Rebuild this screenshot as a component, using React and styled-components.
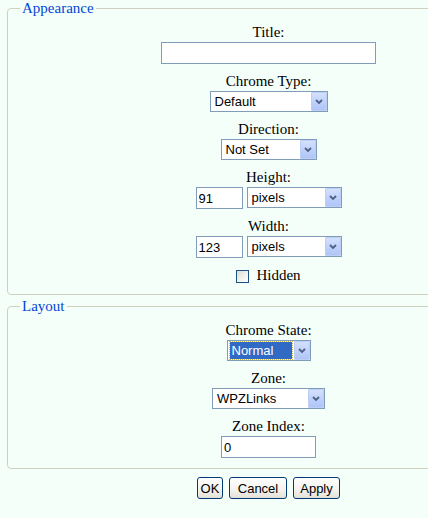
import React from "react";
import styled, { createGlobalStyle } from "styled-components";

const GlobalStyle = createGlobalStyle`
  html, body {
    margin: 0;
    padding: 0;
    overflow: hidden;
    background-color: #f5fffa;
  }
  body {
    font-family: "Liberation Serif", "Times New Roman", serif;
    font-size: 15px;
    color: #000;
  }
`;

const Page = styled.div`
  padding-left: 7px;
  width: 523px;
`;

const FieldSet = styled.fieldset`
  box-sizing: border-box;
  width: 523px;
  margin: ${(props) => (props.$first ? "0" : "3px 0 0")};
  padding: 0 12px 10px;
  border: 1px solid #d0d0bf;
  border-radius: 4px;
  min-inline-size: 0;
`;

const Legend = styled.legend`
  padding: 0 2px;
  color: #0046d5;
  font-size: 15px;
  line-height: 17px;
`;

const FieldList = styled.div`
  display: flex;
  flex-direction: column;
  align-items: center;
  gap: 9px;
  padding-top: 7px;
`;

const Field = styled.div`
  display: flex;
  flex-direction: column;
  align-items: center;
`;

const Label = styled.div`
  line-height: 17px;
  margin-bottom: 1px;
`;

const ControlRow = styled.div`
  display: flex;
  gap: 4px;
`;

const TextBox = styled.input`
  box-sizing: border-box;
  width: ${(props) => props.$width}px;
  height: 22px;
  margin: 0;
  padding: 0 2px;
  border: 1px solid #7f9db9;
  background: #fff;
  font-family: "Liberation Sans", Arial, sans-serif;
  font-size: 13px;
  color: #000;
  outline: none;
`;

const DropBox = styled.div`
  box-sizing: border-box;
  display: flex;
  align-items: stretch;
  width: ${(props) => props.$width}px;
  height: 21px;
  border: 1px solid #7f9db9;
  background: #fff;
  font-family: "Liberation Sans", Arial, sans-serif;
  font-size: 13px;
`;

const DropValue = styled.span`
  flex: 1;
  display: flex;
  align-items: center;
  margin: 1px 2px;
  padding-left: 2px;
  line-height: 17px;
  white-space: nowrap;
  overflow: hidden;
  color: ${(props) => (props.$focused ? "#fff" : "#000")};
  background: ${(props) => (props.$focused ? "#316ac5" : "transparent")};
  outline: ${(props) => (props.$focused ? "1px dotted #c8b85a" : "none")};
`;

const DropArrow = styled.span`
  box-sizing: border-box;
  width: 16px;
  display: flex;
  align-items: center;
  justify-content: center;
  border: 1px solid #bccdf7;
  border-radius: 1px;
  background: linear-gradient(180deg, #d4e0fd 0%, #bccffa 60%, #b1c6f6 100%);
`;

const CheckRow = styled.label`
  display: flex;
  align-items: center;
  gap: 7px;
  line-height: 17px;
`;

const CheckBox = styled.span`
  box-sizing: border-box;
  width: 13px;
  height: 13px;
  margin-top: 1px;
  border: 1px solid #1c5180;
  background: linear-gradient(135deg, #dcdcd7 0%, #f4f4f0 60%, #fff 100%);
`;

const ButtonBar = styled.div`
  display: flex;
  justify-content: center;
  gap: 6px;
  width: 523px;
  margin-top: 8px;
`;

const Button = styled.button`
  box-sizing: border-box;
  width: ${(props) => props.$width}px;
  height: 22px;
  padding: 0;
  border: 1px solid #003c74;
  border-radius: 3px;
  background: linear-gradient(180deg, #ffffff 0%, #f3f2ee 60%, #e3e0d6 100%);
  font-family: "Liberation Sans", Arial, sans-serif;
  font-size: 13px;
  color: #000;
`;

function Chevron() {
  return (
    <svg width="8" height="6" viewBox="0 0 8 6">
      <path d="M1 1 L4 4 L7 1" fill="none" stroke="#4d6185" strokeWidth="1.8" />
    </svg>
  );
}

function DropDown({ width, value, focused }) {
  return (
    <DropBox $width={width}>
      <DropValue $focused={focused}>{value}</DropValue>
      <DropArrow>
        <Chevron />
      </DropArrow>
    </DropBox>
  );
}

export default function App() {
  return (
    <>
      <GlobalStyle />
      <Page>
        <FieldSet $first>
          <Legend>Appearance</Legend>
          <FieldList>
            <Field>
              <Label>Title:</Label>
              <TextBox $width={215} defaultValue="" />
            </Field>
            <Field>
              <Label>Chrome Type:</Label>
              <DropDown width={118} value="Default" />
            </Field>
            <Field>
              <Label>Direction:</Label>
              <DropDown width={96} value="Not Set" />
            </Field>
            <Field>
              <Label>Height:</Label>
              <ControlRow>
                <TextBox $width={47} defaultValue="91" />
                <DropDown width={95} value="pixels" />
              </ControlRow>
            </Field>
            <Field>
              <Label>Width:</Label>
              <ControlRow>
                <TextBox $width={47} defaultValue="123" />
                <DropDown width={95} value="pixels" />
              </ControlRow>
            </Field>
            <CheckRow>
              <CheckBox />
              Hidden
            </CheckRow>
          </FieldList>
        </FieldSet>
        <FieldSet>
          <Legend>Layout</Legend>
          <FieldList>
            <Field>
              <Label>Chrome State:</Label>
              <DropDown width={84} value="Normal" focused />
            </Field>
            <Field>
              <Label>Zone:</Label>
              <DropDown width={113} value="WPZLinks" />
            </Field>
            <Field>
              <Label>Zone Index:</Label>
              <TextBox $width={95} defaultValue="0" />
            </Field>
          </FieldList>
        </FieldSet>
        <ButtonBar>
          <Button $width={26}>OK</Button>
          <Button $width={58}>Cancel</Button>
          <Button $width={47}>Apply</Button>
        </ButtonBar>
      </Page>
    </>
  );
}
